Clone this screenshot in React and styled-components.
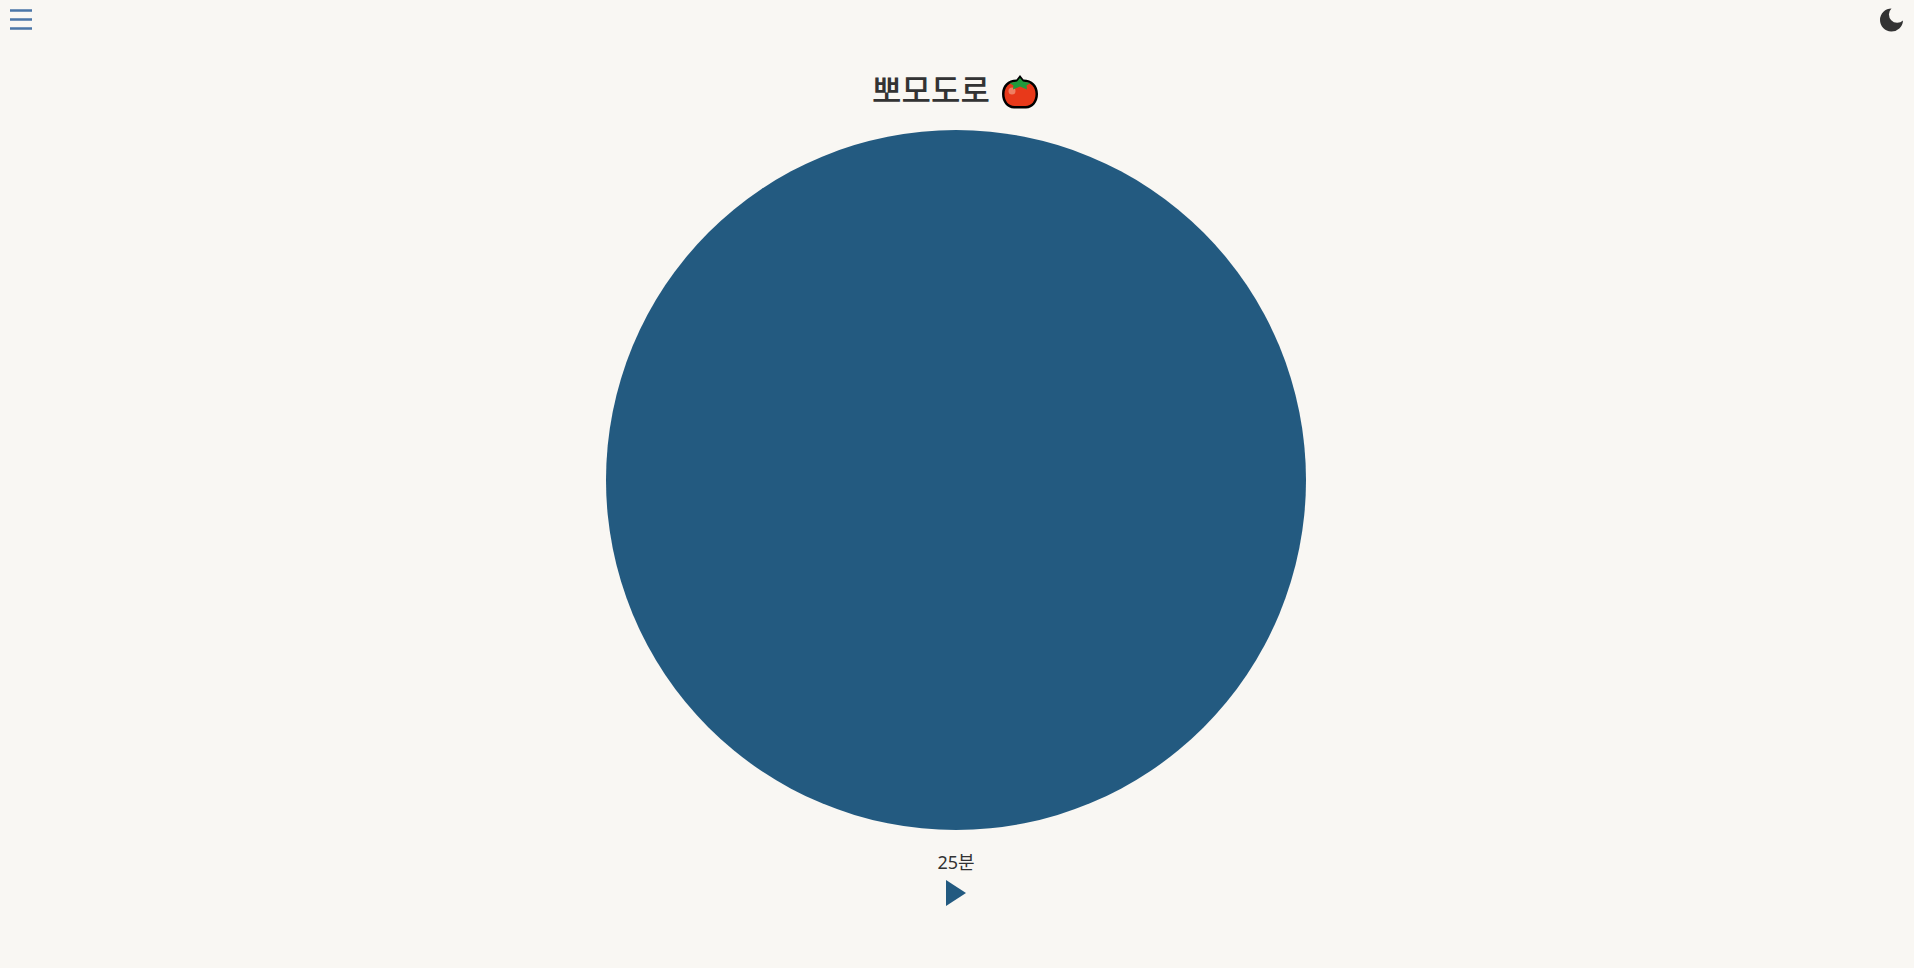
import React from 'react';
import styled, { createGlobalStyle } from 'styled-components';

const Global = createGlobalStyle`
  html, body { margin: 0; padding: 0; background: #f9f7f3; }
  body { font-family: "Noto Sans", "Noto Sans CJK KR", sans-serif; color: #333; }
`;
const Page = styled.div`
  width: 1912px;
  height: 968px;
  overflow: hidden;
  display: flex;
  flex-direction: column;
  align-items: center;
  position: relative;
`;
const TopBar = styled.header`
  align-self: stretch;
  width: 1914px;
  height: 70px;
  box-sizing: border-box;
  padding: 8px 11px 0 9px;
  display: flex;
  justify-content: space-between;
  align-items: flex-start;
`;
const IconButton = styled.button`
  border: 0;
  padding: 0;
  background: none;
  display: block;
  line-height: 0;
`;
const Title = styled.h1`
  margin: 0 2px 20px 0;
  height: 40px;
  display: flex;
  align-items: center;
  gap: 12px;
  font-size: 32px;
  font-weight: 500;
  line-height: 40px;
  color: #333;
`;
const TomatoIcon = styled.svg`
  margin-top: 3px;
  flex: none;
`;
const Timer = styled.div`
  width: 700px;
  height: 700px;
  border-radius: 50%;
  background: #235a80;
  flex: none;
`;
const Minutes = styled.div`
  margin-top: 20px;
  font-size: 18px;
  line-height: 24px;
  color: #333;
`;
const PlayButton = styled.button`
  border: 0;
  padding: 0;
  margin-top: 6px;
  background: none;
  line-height: 0;
`;

const Tomato = () => (
  <TomatoIcon width="36" height="35" viewBox="0 0 36 35">
    <path d="M18 1l3.500 4.500C30 5.500 36 11 36 20c0 8-5 14.500-12 14.500H12C5 34.500 0 28 0 20 0 11 6 5.500 14.500 5.500z" fill="#000" />
    <path d="M14 8C7 8 2.500 13 2.500 20S6.500 32 12.500 32h11c6 0 10-5 10-12S29 8 22 8z" fill="#e8391a" />
    <circle cx="10" cy="17" r="3.500" fill="#ef7f62" />
    <path d="M18 4l3 3.500 7.500 1.500-4 2.500.5 4-7-3-7 3 .5-4-4-2.500L15 7.500z" fill="#1f9a3c" />
  </TomatoIcon>
);

export default function App() {
  return (
    <Page>
      <Global />
      <TopBar>
        <IconButton aria-label="menu">
          <svg width="24" height="24" viewBox="0 0 24 24">
            <path d="M1 2.500h22M1 11.500h22M1 20.500h22" stroke="#4a76a8" strokeWidth="2.400" fill="none" />
          </svg>
        </IconButton>
        <IconButton aria-label="theme">
          <svg width="23" height="24" viewBox="0 0 23 24">
            <path d="M11.500.5A11.500 11.500 0 1 0 23 12.500 7 7 0 0 1 11.500.5z" fill="#333" />
          </svg>
        </IconButton>
      </TopBar>
      <Title>뽀모도로 <Tomato /></Title>
      <Timer />
      <Minutes>25분</Minutes>
      <PlayButton aria-label="start">
        <svg width="20" height="26" viewBox="0 0 20 26"><path d="M0 0l20 13L0 26z" fill="#235a80" /></svg>
      </PlayButton>
    </Page>
  );
}
